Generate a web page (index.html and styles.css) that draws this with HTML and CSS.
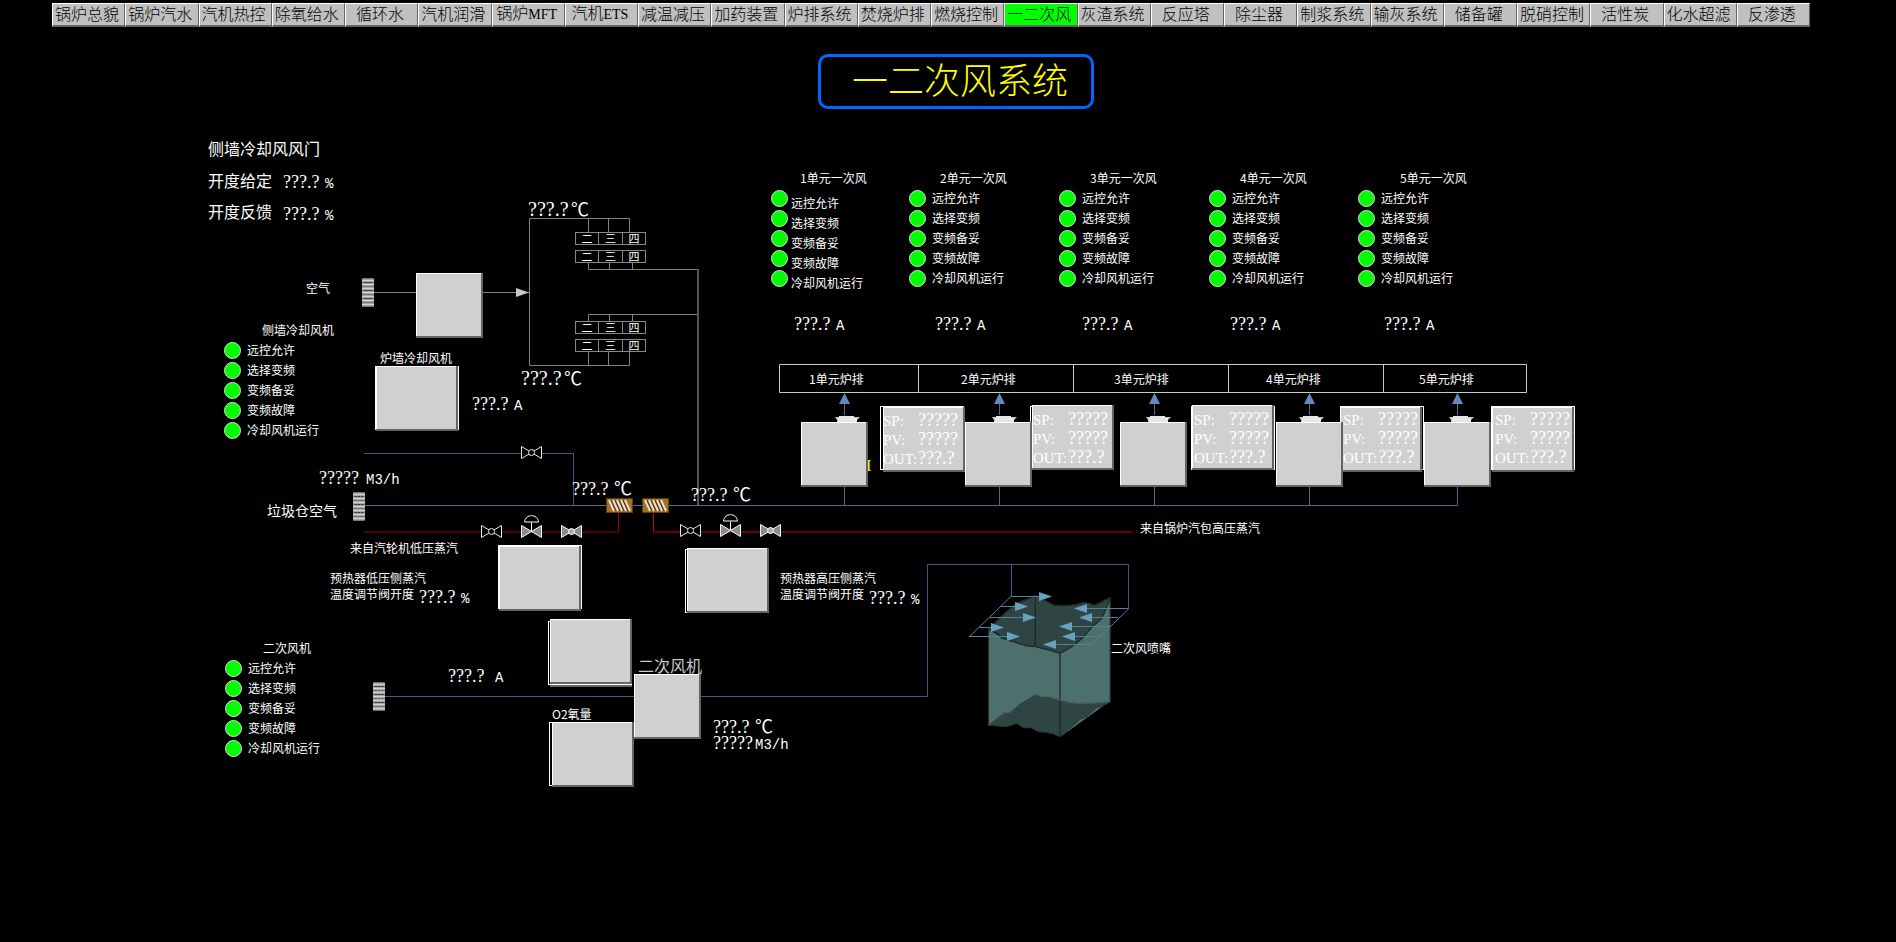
FILE: index.html
```html
<!DOCTYPE html>
<html lang="zh-CN">
<head>
<meta charset="utf-8">
<title>一二次风系统</title>
<link rel="stylesheet" href="styles.css">
</head>
<body>
<div class="screen">
  <svg class="piping" aria-hidden="true">
    <defs>
      <g id="fan">
        <rect width="67" height="65" fill="#646464"/>
        <rect width="65" height="63" fill="#fff"/>
        <rect x="1" y="1" width="64" height="62" fill="#d0d0d0"/>
      </g>
      <g id="panel">
        <rect width="82" height="65" fill="#646464"/>
        <rect width="80" height="63" fill="#fff"/>
        <rect x="1" y="1" width="79" height="62" fill="#d0d0d0"/>
      </g>
      <rect id="frame" x="0.5" y="0.5" width="83" height="63" fill="#000" stroke="#fff"/>
      <g id="outlet">
        <path d="M0 0h25l-3 3v3H2V3z" fill="#c8c8c8"/>
        <path d="M4 -1h15v2h3v5H3V1h1z" fill="#e6e6e6"/>
      </g>
      <g id="louver">
        <rect width="12" height="29" rx="1" fill="#777"/>
        <path d="M0 2.5h12M0 6.5h12M0 10.5h12M0 14.5h12M0 18.5h12M0 22.5h12M0 26.5h12" stroke="#d2d2d2" stroke-width="2"/>
        <path d="M2 4.5h8M2 12.5h8M2 20.5h8" stroke="#333" stroke-dasharray="2 1"/>
      </g>
      <g id="up">
        <path d="M0 11V22" stroke="#4c6a98"/>
        <path d="M0 0L5.5 11h-11z" fill="#6488c0"/>
      </g>
      <g id="valve" stroke="#e8e8e8">
        <path d="M-10 -6L10 6V-6L-10 6z" fill="#000"/>
        <circle r="3" fill="#000"/>
      </g>
      <g id="valve-set" stroke="#fff">
        <path d="M-10 -6L10 6V-6L-10 6z" fill="#8a8a8a"/>
        <circle r="3" fill="#aaa"/>
      </g>
      <g id="valve-control" stroke="#fff">
        <path d="M-10 -6L10 6V-6L-10 6z" fill="#8a8a8a"/>
        <path d="M0 0V-9" fill="none"/>
        <path d="M-7 -9.5C-6 -18 6 -18 7 -9.5z" fill="#000"/>
      </g>
      <g id="heater">
        <rect x="0.5" y="0.5" width="26" height="14" fill="#a07024" stroke="#5c3c10"/>
        <path d="M3 2l5 11M7 2l5 11M11 2l5 11M15 2l5 11M19 2l5 11" stroke="#e8e0d8" stroke-width="2"/>
        <path d="M5 2l5 11M9 2l5 11M13 2l5 11M17 2l5 11" stroke="#4a3010"/>
      </g>
      <path id="jet" d="M0 0l-13 -4.5v9z" fill="#68a0c0"/>
    </defs>

    <g fill="none" stroke="#808080">
      <path d="M373 292.5H529.5M630 218.5H529.5V365.5H629.5V351M588.5 218V232M608.5 218V232M629.5 218V232M588.5 351V365M608.5 351V365"/>
      <path d="M588.5 263V269.5H698.5M609.5 263V269M632.5 263V269M588.5 321V314.5H698M609.5 314V321M632.5 314V321"/>
      <path d="M698 269V505" stroke="#555" stroke-width="2"/>
    </g>
    <path d="M529 292.5l-13 -4.5v9z" fill="#c8c8c8"/>

    <g fill="none" stroke="#3c5a88">
      <path d="M364 453.5H573.5V505"/>
      <path d="M365 505.5H1457.5V487M844.5 487V505M999.5 487V505M1154.5 487V505M1309.5 487V505" stroke="#4c6a98"/>
      <path d="M385 696.5H927.5V564.5H1128.5V609M1011.5 565V596"/>
    </g>
    <path d="M364 532H618.5V513" fill="none" stroke="#a00000"/>
    <path d="M653.5 513V532H1133" fill="none" stroke="#c80000"/>

    <use href="#heater" x="606" y="498"/>
    <use href="#heater" x="642" y="498"/>
    <use href="#valve" x="531.5" y="452.5"/>
    <use href="#valve" x="491.5" y="531.5"/>
    <use href="#valve-control" x="531.5" y="531.5"/>
    <use href="#valve-set" x="571.5" y="531.5"/>
    <use href="#valve" x="690.5" y="530.5"/>
    <use href="#valve-control" x="730.5" y="530.5"/>
    <use href="#valve-set" x="770.5" y="530.5"/>

    <use href="#louver" x="362" y="278"/>
    <use href="#louver" x="353" y="492"/>
    <use href="#louver" x="373" y="682"/>

    <path d="M779.5 364.5H1526.5V392.5H779.5zM918.5 364V392M1073.5 364V392M1228.5 364V392M1383.5 364V392" fill="none" stroke="#c8c8c8"/>
    <use href="#up" x="844.5" y="393"/>
    <use href="#up" x="999.5" y="393"/>
    <use href="#up" x="1154.5" y="393"/>
    <use href="#up" x="1309.5" y="393"/>
    <use href="#up" x="1457.5" y="393"/>

    <text class="flow-unit" x="857" y="471">M</text>
    <use href="#frame" x="880" y="406"/>
    <use href="#panel" x="883" y="407"/>
    <use href="#frame" x="1030" y="406"/>
    <use href="#panel" x="1032" y="405"/>
    <use href="#frame" x="1191" y="406"/>
    <use href="#panel" x="1192" y="405"/>
    <use href="#frame" x="1340" y="406"/>
    <use href="#panel" x="1340" y="407"/>
    <use href="#frame" x="1491" y="406"/>
    <use href="#panel" x="1492" y="407"/>

    <use href="#outlet" x="835" y="417"/>
    <use href="#outlet" x="992" y="417"/>
    <use href="#outlet" x="1146" y="417"/>
    <use href="#outlet" x="1299" y="417"/>
    <use href="#outlet" x="1449" y="417"/>
    <use href="#fan" x="801" y="422"/>
    <use href="#fan" x="965" y="422"/>
    <use href="#fan" x="1120" y="422"/>
    <use href="#fan" x="1276" y="422"/>
    <use href="#fan" x="1424" y="422"/>

    <use href="#fan" x="416" y="273"/>
    <use href="#frame" x="375" y="366"/>
    <use href="#panel" x="376" y="366"/>
    <use href="#frame" x="498" y="545"/>
    <use href="#panel" x="499" y="546"/>
    <use href="#frame" x="685" y="549"/>
    <use href="#panel" x="687" y="548"/>
    <use href="#panel" x="550" y="622"/>
    <use href="#frame" x="548" y="621"/>
    <use href="#panel" x="550" y="619"/>
    <use href="#frame" x="549" y="722"/>
    <use href="#panel" x="552" y="722"/>
    <use href="#fan" x="634" y="674"/>

    <g transform="translate(920 550) scale(0.3333)" stroke-linejoin="round">
      <path d="M205 238L245 262L310 285L346 290L390 300L420 310C450 295 480 275 500 250C525 215 540 215 545 205Q562 170 571 143V455L550 468L420 561L380 547L205 527z" fill="#4c706b"/>
      <path d="M205 527L260 530L290 520L310 533L335 534L355 545L375 547L400 551L420 561V568H205z" fill="#000"/>
      <path d="M346 433L365 440L385 440L450 458Q500 463 571 455L557 460L548 470L530 472L500 500L480 508L420 561L400 551L375 547L355 545L335 534L310 533L290 520L260 530L205 525L250 490L272 486L300 460L320 450z" fill="#2f4543" stroke="#2a3534" stroke-width="3"/>
      <path d="M346 137L320 150L290 160Q262 180 240 205L205 238L235 252L245 264L290 278Q320 290 346 290Q390 300 420 310C450 295 480 275 500 250C525 215 540 215 545 205Q562 170 571 143L522 166Q500 152 475 162Q440 170 400 165L370 148z" fill="#2f4543"/>
      <g fill="none" stroke="#222827" stroke-width="4">
        <path d="M205 527V238M420 561V310M571 455V143M346 290V137"/>
        <path d="M205 238L235 252L245 264L290 278Q320 290 346 290Q390 300 420 310C450 295 480 275 500 250C525 215 540 215 545 205Q562 170 571 143L522 166Q500 152 475 162Q440 170 400 165L370 148L346 137L290 160Q262 180 205 238"/>
        <path d="M346 290V433" stroke="#5c6866" stroke-width="3"/>
        <path d="M205 525L250 490L272 486L300 460L346 433L365 440L385 440L450 458Q500 463 571 455" stroke="#687a77" stroke-width="2"/>
      </g>
    </g>
    <path d="M1011.5 596L969 637M1128.5 609L1092 644.5M1011 596.5H1045M1001 606.5H1020M990 617.5H1028M979 627.5H996M969 636.5H1012M1128 608.5H1083M1118 617.5H1087M1110 626.5H1067M1101 636.5H1071M1092 644.5H1051" fill="none" stroke="#5080a0"/>
    <use href="#jet" x="1052" y="596.5"/>
    <use href="#jet" x="1028" y="606.5"/>
    <use href="#jet" x="1036" y="617.5"/>
    <use href="#jet" x="1004" y="627.5"/>
    <use href="#jet" x="1020" y="636.5"/>
    <g transform="scale(-1 1)">
      <use href="#jet" x="-1074" y="608.5"/>
      <use href="#jet" x="-1079" y="617.5"/>
      <use href="#jet" x="-1059" y="626.5"/>
      <use href="#jet" x="-1062" y="636.5"/>
      <use href="#jet" x="-1043" y="644.5"/>
    </g>
  </svg>

  <nav class="tabs">
    <button class="tab">锅炉总貌</button><button class="tab">锅炉汽水</button><button class="tab">汽机热控</button><button class="tab">除氧给水</button><button class="tab">循环水</button><button class="tab">汽机润滑</button><button class="tab">锅炉<span class="latin">MFT</span></button><button class="tab">汽机<span class="latin">ETS</span></button><button class="tab">减温减压</button><button class="tab">加药装置</button><button class="tab">炉排系统</button><button class="tab">焚烧炉排</button><button class="tab">燃烧控制</button><button class="tab tab-active" aria-current="page">一二次风</button><button class="tab">灰渣系统</button><button class="tab">反应塔</button><button class="tab">除尘器</button><button class="tab">制浆系统</button><button class="tab">输灰系统</button><button class="tab">储备罐</button><button class="tab">脱硝控制</button><button class="tab">活性炭</button><button class="tab">化水超滤</button><button class="tab">反渗透</button>
  </nav>
  <header class="heading"><h1 class="title">一二次风系统</h1></header>

  <main>
    <p class="label large at-door">侧墙冷却风风门</p>
    <p class="label large at-door-set">开度给定</p>
    <p class="label reading at-door-set-value"><span class="value">???.?</span><span>%</span></p>
    <p class="label large at-door-back">开度反馈</p>
    <p class="label reading at-door-back-value"><span class="value">???.?</span><span>%</span></p>

    <p class="label reading wide at-temp-top"><span class="value">???.?</span><span class="unit-c">℃</span></p>
    <p class="label reading wide at-temp-bottom"><span class="value">???.?</span><span class="unit-c">℃</span></p>
    <ul class="cells at-cells-1"><li>二</li><li>三</li><li>四</li></ul>
    <ul class="cells at-cells-2"><li>二</li><li>三</li><li>四</li></ul>
    <ul class="cells at-cells-3"><li>二</li><li>三</li><li>四</li></ul>
    <ul class="cells at-cells-4"><li>二</li><li>三</li><li>四</li></ul>

    <p class="label at-air">空气</p>
    <p class="label at-wall-fan">炉墙冷却风机</p>
    <p class="label reading at-wall-amps"><span class="value">???.?</span><span>A</span></p>

    <h2 class="label at-side-title">侧墙冷却风机</h2>
    <ul class="status at-side-status"><li><span>远控允许</span></li><li><span>选择变频</span></li><li><span>变频备妥</span></li><li><span>变频故障</span></li><li><span>冷却风机运行</span></li></ul>

    <h2 class="label at-unit1-title">1单元一次风</h2>
    <ul class="status status-low at-unit1-status"><li><span>远控允许</span></li><li><span>选择变频</span></li><li><span>变频备妥</span></li><li><span>变频故障</span></li><li><span>冷却风机运行</span></li></ul>
    <p class="label reading at-unit1-amps"><span class="value">???.?</span><span>A</span></p>
    <p class="label at-grate1">1单元炉排</p>
    <dl class="loop at-loop1"><dt>SP:</dt><dd>?????</dd><dt>PV:</dt><dd>?????</dd><dt>OUT:</dt><dd>???.?</dd></dl>

    <h2 class="label at-unit2-title">2单元一次风</h2>
    <ul class="status at-unit2-status"><li><span>远控允许</span></li><li><span>选择变频</span></li><li><span>变频备妥</span></li><li><span>变频故障</span></li><li><span>冷却风机运行</span></li></ul>
    <p class="label reading at-unit2-amps"><span class="value">???.?</span><span>A</span></p>
    <p class="label at-grate2">2单元炉排</p>
    <dl class="loop at-loop2"><dt>SP:</dt><dd>?????</dd><dt>PV:</dt><dd>?????</dd><dt>OUT:</dt><dd>???.?</dd></dl>

    <h2 class="label at-unit3-title">3单元一次风</h2>
    <ul class="status at-unit3-status"><li><span>远控允许</span></li><li><span>选择变频</span></li><li><span>变频备妥</span></li><li><span>变频故障</span></li><li><span>冷却风机运行</span></li></ul>
    <p class="label reading at-unit3-amps"><span class="value">???.?</span><span>A</span></p>
    <p class="label at-grate3">3单元炉排</p>
    <dl class="loop at-loop3"><dt>SP:</dt><dd>?????</dd><dt>PV:</dt><dd>?????</dd><dt>OUT:</dt><dd>???.?</dd></dl>

    <h2 class="label at-unit4-title">4单元一次风</h2>
    <ul class="status at-unit4-status"><li><span>远控允许</span></li><li><span>选择变频</span></li><li><span>变频备妥</span></li><li><span>变频故障</span></li><li><span>冷却风机运行</span></li></ul>
    <p class="label reading at-unit4-amps"><span class="value">???.?</span><span>A</span></p>
    <p class="label at-grate4">4单元炉排</p>
    <dl class="loop at-loop4"><dt>SP:</dt><dd>?????</dd><dt>PV:</dt><dd>?????</dd><dt>OUT:</dt><dd>???.?</dd></dl>

    <h2 class="label at-unit5-title">5单元一次风</h2>
    <ul class="status at-unit5-status"><li><span>远控允许</span></li><li><span>选择变频</span></li><li><span>变频备妥</span></li><li><span>变频故障</span></li><li><span>冷却风机运行</span></li></ul>
    <p class="label reading at-unit5-amps"><span class="value">???.?</span><span>A</span></p>
    <p class="label at-grate5">5单元炉排</p>
    <dl class="loop at-loop5"><dt>SP:</dt><dd>?????</dd><dt>PV:</dt><dd>?????</dd><dt>OUT:</dt><dd>???.?</dd></dl>

    <p class="label reading spaced at-intake-flow"><span class="value">?????</span><span>M3/h</span></p>
    <p class="label medium at-intake">垃圾仓空气</p>
    <p class="label reading at-heater1-temp"><span class="value">???.?</span><span class="unit-c">℃</span></p>
    <p class="label reading at-heater2-temp"><span class="value">???.?</span><span class="unit-c">℃</span></p>
    <p class="label at-low-steam">来自汽轮机低压蒸汽</p>
    <p class="label at-high-steam">来自锅炉汽包高压蒸汽</p>
    <p class="label at-low-valve">预热器低压侧蒸汽<br>温度调节阀开度</p>
    <p class="label reading at-low-valve-value"><span class="value">???.?</span><span>%</span></p>
    <p class="label at-high-valve">预热器高压侧蒸汽<br>温度调节阀开度</p>
    <p class="label reading at-high-valve-value"><span class="value">???.?</span><span>%</span></p>

    <h2 class="label at-second-title">二次风机</h2>
    <ul class="status at-second-status"><li><span>远控允许</span></li><li><span>选择变频</span></li><li><span>变频备妥</span></li><li><span>变频故障</span></li><li><span>冷却风机运行</span></li></ul>
    <p class="label reading spaced at-second-amps"><span class="value">???.?</span><span>A</span></p>
    <p class="label large dim at-second-fan">二次风机</p>
    <p class="label at-oxygen">O2氧量</p>
    <p class="label reading at-second-temp"><span class="value">???.?</span><span class="unit-c">℃</span></p>
    <p class="label reading at-second-flow"><span class="value">?????</span><span>M3/h</span></p>
    <p class="label at-nozzle">二次风喷嘴</p>
  </main>
</div>
</body>
</html>
```
FILE: styles.css
```css
* { box-sizing: border-box; }

body {
  margin: 0;
  background: #000;
  color: #fff;
  font: 400 12px/16px "Noto Sans CJK SC", "Liberation Sans", sans-serif;
}

h1, h2, p, ul, dl, dd { margin: 0; padding: 0; font-weight: 400; }
ul { list-style: none; }

.screen { position: relative; min-height: 100vh; }
.piping { position: absolute; top: 0; left: 0; width: 100%; height: 100%; overflow: visible; }
.flow-unit { fill: #ffff00; font: 16px "Liberation Serif", serif; }

/* Page tabs */
.tabs { position: relative; display: flex; padding: 3px 86px 0 52px; }
.tab {
  flex: 1 1 0;
  min-width: 0;
  height: 24px;
  padding: 0 3px 4px 0;
  border: solid;
  border-width: 1px 1px 2px 1px;
  border-color: #fff #646464 #646464 #fff;
  background: #c0c0c0;
  color: #000;
  font: 300 16px/16px "Noto Sans CJK SC", sans-serif;
  white-space: nowrap;
}
.tab-active { background: #00ff00; }
.latin { font: 14px/12px "Liberation Serif", serif; }

/* Screen title */
.heading { position: relative; display: flex; justify-content: center; padding: 27px 0 0 16px; }
.title {
  padding: 0 23px 6px 31px;
  border: 3px solid #0068ff;
  border-radius: 10px;
  color: #ffff00;
  font-size: 36px;
  font-weight: 300;
  line-height: 43px;
}

/* Labels on the drawing */
.label { position: absolute; font-size: 12px; line-height: 16px; white-space: nowrap; }
.medium { font-size: 14px; }
.large { font-size: 16px; }
.dim { color: #c8c8c8; }
.reading { display: flex; align-items: baseline; font: 14px/16px "Liberation Mono", monospace; }
.value { min-width: 42px; font: 18px/16px "Liberation Serif", serif; }
.spaced { gap: 5px; }
.wide .value { min-width: 43px; font-size: 20px; }
.unit-c { font: 400 18px/16px "Noto Sans CJK SC", sans-serif; }

/* Fan status lamps */
.status { position: absolute; }
.status li { display: flex; align-items: center; gap: 6px; height: 20px; line-height: 12px; white-space: nowrap; }
.status li::before {
  content: "";
  width: 15px;
  height: 15px;
  border: 1px solid #e0d8e0;
  border-radius: 50%;
  background: #00ff00;
}
.status-low li { gap: 3px; }
.status-low span { padding-top: 10px; }

.cells {
  position: absolute;
  display: grid;
  grid-template-columns: 23px 24px 23px;
  border: 1px solid #888;
  border-right: 0;
}
.cells li { height: 11px; border-right: 1px solid #888; font-size: 11px; line-height: 10px; text-align: center; }

.loop {
  position: absolute;
  display: grid;
  grid-template-columns: 35px auto;
  align-items: baseline;
  font: 18px/18px "Liberation Serif", serif;
}
.loop dt { font-size: 15px; }

/* Positions on the drawing */
.at-door { left: 208px; top: 140px; }
.at-door-set { left: 208px; top: 172px; }
.at-door-set-value { left: 283px; top: 174px; }
.at-door-back { left: 208px; top: 203px; }
.at-door-back-value { left: 283px; top: 206px; }
.at-temp-top { left: 528px; top: 200px; }
.at-temp-bottom { left: 521px; top: 369px; }
.at-cells-1 { left: 575px; top: 232px; }
.at-cells-2 { left: 575px; top: 250px; }
.at-cells-3 { left: 575px; top: 321px; }
.at-cells-4 { left: 575px; top: 339px; }
.at-air { left: 306px; top: 280px; }
.at-wall-fan { left: 380px; top: 350px; }
.at-wall-amps { left: 472px; top: 396px; }
.at-side-title { left: 262px; top: 322px; }
.at-side-status { left: 224px; top: 340px; }

.at-unit1-title { left: 800px; top: 170px; }
.at-unit2-title { left: 940px; top: 170px; }
.at-unit3-title { left: 1090px; top: 170px; }
.at-unit4-title { left: 1240px; top: 170px; }
.at-unit5-title { left: 1400px; top: 170px; }
.at-unit1-status { left: 771px; top: 188px; }
.at-unit2-status { left: 909px; top: 188px; }
.at-unit3-status { left: 1059px; top: 188px; }
.at-unit4-status { left: 1209px; top: 188px; }
.at-unit5-status { left: 1358px; top: 188px; }
.at-unit1-amps { left: 794px; top: 316px; }
.at-unit2-amps { left: 935px; top: 316px; }
.at-unit3-amps { left: 1082px; top: 316px; }
.at-unit4-amps { left: 1230px; top: 316px; }
.at-unit5-amps { left: 1384px; top: 316px; }
.at-grate1 { left: 809px; top: 371px; }
.at-grate2 { left: 961px; top: 371px; }
.at-grate3 { left: 1114px; top: 371px; }
.at-grate4 { left: 1266px; top: 371px; }
.at-grate5 { left: 1419px; top: 371px; }
.at-loop1 { left: 883px; top: 411px; }
.at-loop2 { left: 1033px; top: 410px; }
.at-loop3 { left: 1194px; top: 410px; }
.at-loop4 { left: 1343px; top: 410px; }
.at-loop5 { left: 1495px; top: 410px; }

.at-intake-flow { left: 319px; top: 470px; }
.at-intake { left: 267px; top: 502px; }
.at-heater1-temp { left: 572px; top: 479px; }
.at-heater2-temp { left: 691px; top: 485px; }
.at-low-steam { left: 350px; top: 540px; }
.at-high-steam { left: 1140px; top: 520px; }
.at-low-valve { left: 330px; top: 570px; }
.at-low-valve-value { left: 419px; top: 589px; }
.at-high-valve { left: 780px; top: 570px; }
.at-high-valve-value { left: 869px; top: 590px; }

.at-second-title { left: 263px; top: 640px; }
.at-second-status { left: 225px; top: 658px; }
.at-second-amps { left: 448px; top: 668px; }
.at-second-fan { left: 638px; top: 657px; }
.at-oxygen { left: 552px; top: 706px; }
.at-second-temp { left: 713px; top: 717px; }
.at-second-flow { left: 713px; top: 735px; }
.at-nozzle { left: 1111px; top: 640px; }
```
